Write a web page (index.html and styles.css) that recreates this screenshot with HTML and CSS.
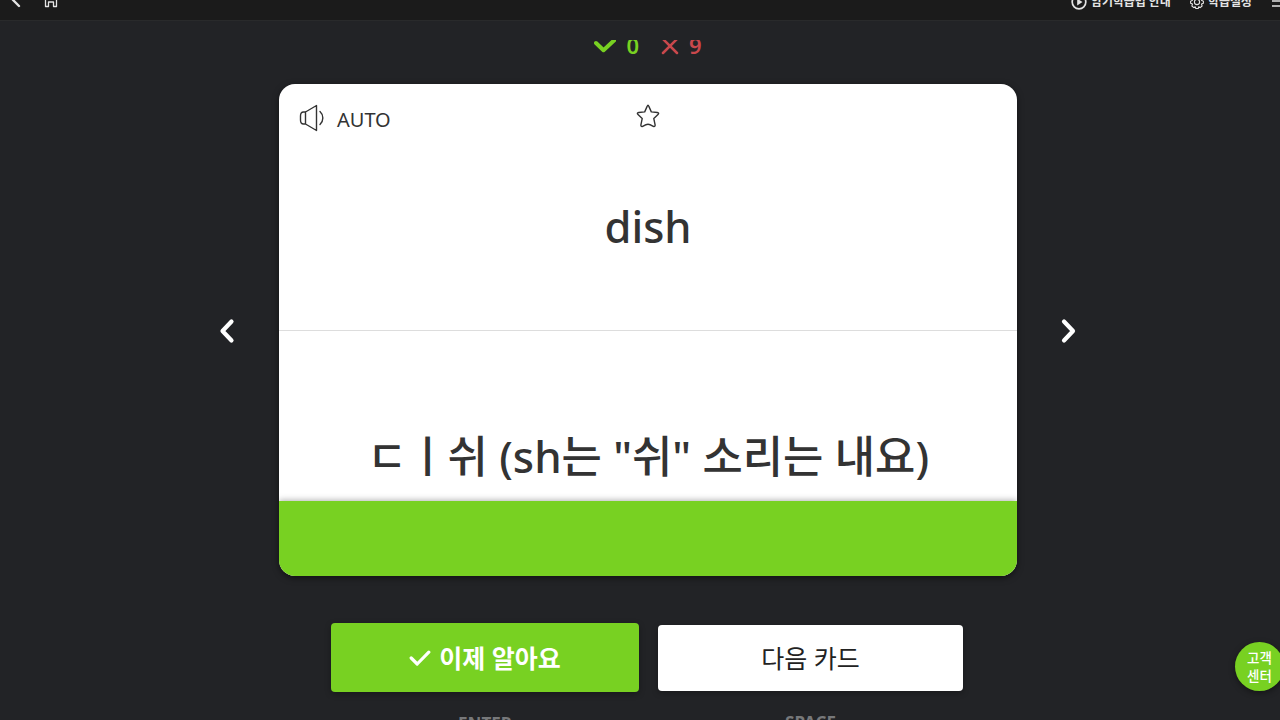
FILE: index.html
```html
<!DOCTYPE html>
<html lang="ko">

<head>
    <meta charset="UTF-8">
    <meta name="viewport" content="width=device-width, initial-scale=1.0">
    <title>암기학습</title>
    <link rel="stylesheet" href="styles.css">
</head>

<body>
    <header class="topbar">
        <div class="topbar-inner">
            <svg class="icon-back" width="12" height="16" viewBox="0 0 12 16"><path d="M9 2 3 8l6 6"/></svg>
            <svg class="icon-home" width="14" height="16" viewBox="0 0 14 16"><path d="M1.500 6 7 1.500 12.500 6v8.500H9.500V10h-5v4.500h-3z"/></svg>
            <div class="menu menu-guide">
                <svg width="16" height="16" viewBox="0 0 16 16"><circle cx="8" cy="8" r="6.800"/><path class="solid" d="M6.200 4.600v6.800L11.500 8z"/></svg>
                <span>암기학습법 안내</span>
            </div>
            <div class="menu menu-setting">
                <svg class="gear" width="14" height="16" viewBox="0 0 14 16"><path d="M5.700 1.500h2.600l.5 1.800 1.800-.7 1.900 2-1 1.700 1.900.9v2l-1.900.9.600 1.900-1.900 1.600-1.500-.8-.5 1.700H5.800l-.5-1.700-1.500.8L1.900 12l.6-1.900L.6 9.200v-2l1.900-.9-1-1.700 1.900-2 1.800.7z"/><circle cx="7" cy="8" r="2.600"/></svg>
                <span>학습설정</span>
            </div>
            <svg class="icon-list" width="14" height="16" viewBox="0 0 14 16"><path d="M0 4h14M0 9h14M0 14h14"/></svg>
        </div>
    </header>

    <main>
        <div class="score">
            <div class="known">
                <svg width="22" height="16" viewBox="0 0 22 16"><path d="M2 3 9.500 10.200 20.500 0"/></svg>
                <span>0</span>
            </div>
            <div class="unknown">
                <svg width="18" height="18" viewBox="0 0 18 18"><path d="M2 1l14 14M16 1 2 15"/></svg>
                <span>9</span>
            </div>
        </div>

        <div class="study">
            <button class="prev"><svg width="16" height="26" viewBox="0 0 16 26"><path d="M12.500 3.500 3.500 13l9 9.500"/></svg></button>
            <div class="card">
                <div class="front">
                    <div class="card-tools">
                        <div class="auto">
                            <svg width="26" height="28" viewBox="0 0 26 28"><path d="M6.500 8H4.500C2 8 1.500 9.500 1.500 12v4c0 3 .7 4 3 4h2zM6.500 8 17.500 1.500v25L6.500 20M21 7.500c3.800 3.500 3.800 9.500 0 13"/></svg>
                            <span>AUTO</span>
                        </div>
                        <svg class="star" width="24" height="24" viewBox="0 0 24 24"><path d="M12 1.300c.5 0 .7.600 1 1.300l2.300 5.300 6 .6c1.500.2 1.700 1.200.7 2.100l-4.200 4 1.300 6.200c.2 1.500-.5 1.900-1.800 1.500C15 21 13.500 20.300 12 20.300S9 21 6.700 22.300c-1.300.4-2 0-1.800-1.500l1.300-6.200-4.200-4c-1-.9-.8-1.900.7-2.100l6-.6L11 2.600c.3-.7.500-1.300 1-1.300z"/></svg>
                    </div>
                    <div class="word">dish</div>
                </div>
                <div class="back">
                    <div class="meaning">ㄷㅣ쉬 (sh는 "쉬" 소리는 내요)</div>
                </div>
                <div class="cover"></div>
            </div>
            <button class="next"><svg width="16" height="26" viewBox="0 0 16 26"><path d="m3 3.500 9 9.500-9 9.500"/></svg></button>
        </div>

        <div class="actions">
            <div class="action">
                <button class="btn-known">
                    <svg width="22" height="16" viewBox="0 0 22 16"><path d="m2.200 8 6 6L19.800 2.200"/></svg>
                    <span>이제 알아요</span>
                </button>
                <p>ENTER</p>
            </div>
            <div class="action">
                <button class="btn-next">다음 카드</button>
                <p>SPACE</p>
            </div>
        </div>
    </main>

    <a class="help">고객<br>센터</a>
</body>

</html>
```

FILE: styles.css
```css
* {
    box-sizing: border-box;
}

body {
    margin: 0;
    height: 720px;
    overflow: hidden;
    background: #222326;
    color: #333;
    font-family: "Noto Sans", "Noto Sans CJK KR", sans-serif;
}

svg {
    display: block;
    flex: none;
    fill: none;
    stroke: currentColor;
    stroke-linecap: round;
    stroke-linejoin: round;
}

button {
    padding: 0;
    border: none;
    background: none;
    color: inherit;
    font: inherit;
    cursor: pointer;
}

/* top bar */
.topbar {
    height: 21px;
    overflow: hidden;
    background: #1b1b1b;
    border-bottom: 1px solid #292a2b;
    color: #e4e4e4;
}

.topbar-inner {
    display: flex;
    align-items: center;
    height: 40px;
    margin-top: -20px;
    padding-left: 10px;
}

.icon-back {
    stroke-width: 2.4;
}

.icon-home {
    margin-left: 22px;
    stroke-width: 1.3;
}

.menu {
    display: flex;
    align-items: center;
    gap: 4px;
    height: 40px;
    font-size: 12px;
    font-weight: 700;
    line-height: 16px;
    white-space: nowrap;
}

.menu span {
    padding-top: 4px;
    letter-spacing: -0.1px;
}

.menu svg {
    margin-top: 3px;
    stroke-width: 1.7;
}

.menu .gear {
    stroke-width: 1.1;
}

.solid {
    fill: currentColor;
    stroke: none;
}

.menu-guide {
    width: 119px;
    margin-left: auto;
}

.menu-setting {
    width: 70px;
}

.icon-list {
    margin: 0 -6px 0 12px;
    stroke-width: 1.6;
}

/* score */
.score {
    display: flex;
    justify-content: center;
    gap: 22px;
    height: 24px;
    margin-top: 19px;
    padding-left: 16px;
    overflow: hidden;
    font-size: 22px;
    font-weight: 600;
    line-height: 11px;
}

.score div {
    display: flex;
    gap: 10px;
}

.known {
    color: #78d122;
}

.known svg {
    stroke-width: 4;
}

.unknown {
    color: #c9484c;
}

.unknown svg {
    margin-top: -2px;
    stroke-width: 2.5;
}

/* card */
.study {
    display: flex;
    justify-content: center;
    align-items: center;
    gap: 44px;
    margin-top: 20px;
    padding-left: 16px;
    color: #fff;
}

.study > button {
    padding-top: 2px;
}

.study > button svg {
    stroke-width: 4.2;
}

.card {
    display: flex;
    flex-direction: column;
    width: 738px;
    height: 492px;
    overflow: hidden;
    border-radius: 16px;
    background: #fff;
    box-shadow: 0 2px 6px rgba(0, 0, 0, 0.5);
    color: #333;
}

.front {
    height: 247px;
    border-bottom: 1px solid #ddd;
}

.card-tools {
    display: grid;
    grid-template-columns: 1fr auto 1fr;
    padding: 20px 19px 0;
}

.auto {
    display: flex;
    align-items: center;
    gap: 12px;
    height: 28px;
    padding-left: 1px;
    font-size: 20px;
}

.auto span {
    padding-top: 2px;
}

.card-tools svg {
    stroke-width: 1.4;
}

.word,
.meaning {
    font-weight: 500;
    line-height: 60px;
    text-align: center;
    white-space: nowrap;
}

.word {
    margin-top: 64px;
    font-size: 43.5px;
}

.meaning {
    font-size: 43.8px;
}

.back {
    height: 170px;
    padding-top: 95px;
}

.cover {
    flex: 1;
    background: #78d122;
    box-shadow: 0 -1px 6px rgba(0, 0, 0, 0.3);
}

/* buttons */
.actions {
    display: flex;
    justify-content: center;
    align-items: flex-start;
    gap: 19px;
    margin-top: 47px;
    padding-left: 14px;
}

.action p {
    margin: 20px 0 0;
    color: #77787a;
    font-size: 17px;
    font-weight: 700;
    line-height: 23px;
    text-align: center;
}

.btn-known,
.btn-next {
    display: flex;
    justify-content: center;
    align-items: center;
    gap: 8px;
    border-radius: 4px;
    box-shadow: 0 2px 6px rgba(0, 0, 0, 0.3);
    font-size: 25px;
}

.btn-known {
    width: 308px;
    height: 69px;
    padding-bottom: 2px;
    background: #78d122;
    color: #fff;
    font-weight: 700;
}

.btn-known svg {
    margin-top: 2px;
    stroke-width: 3.2;
}

.btn-next {
    width: 305px;
    height: 66px;
    margin-top: 2px;
    padding-bottom: 3px;
    background: #fff;
    color: #222;
}

.help {
    position: absolute;
    top: 642px;
    left: 1235px;
    width: 49px;
    height: 49px;
    padding-top: 7px;
    border-radius: 50%;
    background: #78d122;
    box-shadow: 0 2px 6px rgba(0, 0, 0, 0.4);
    color: #fff;
    font-size: 13.5px;
    font-weight: 500;
    line-height: 18px;
    text-align: center;
}
```
